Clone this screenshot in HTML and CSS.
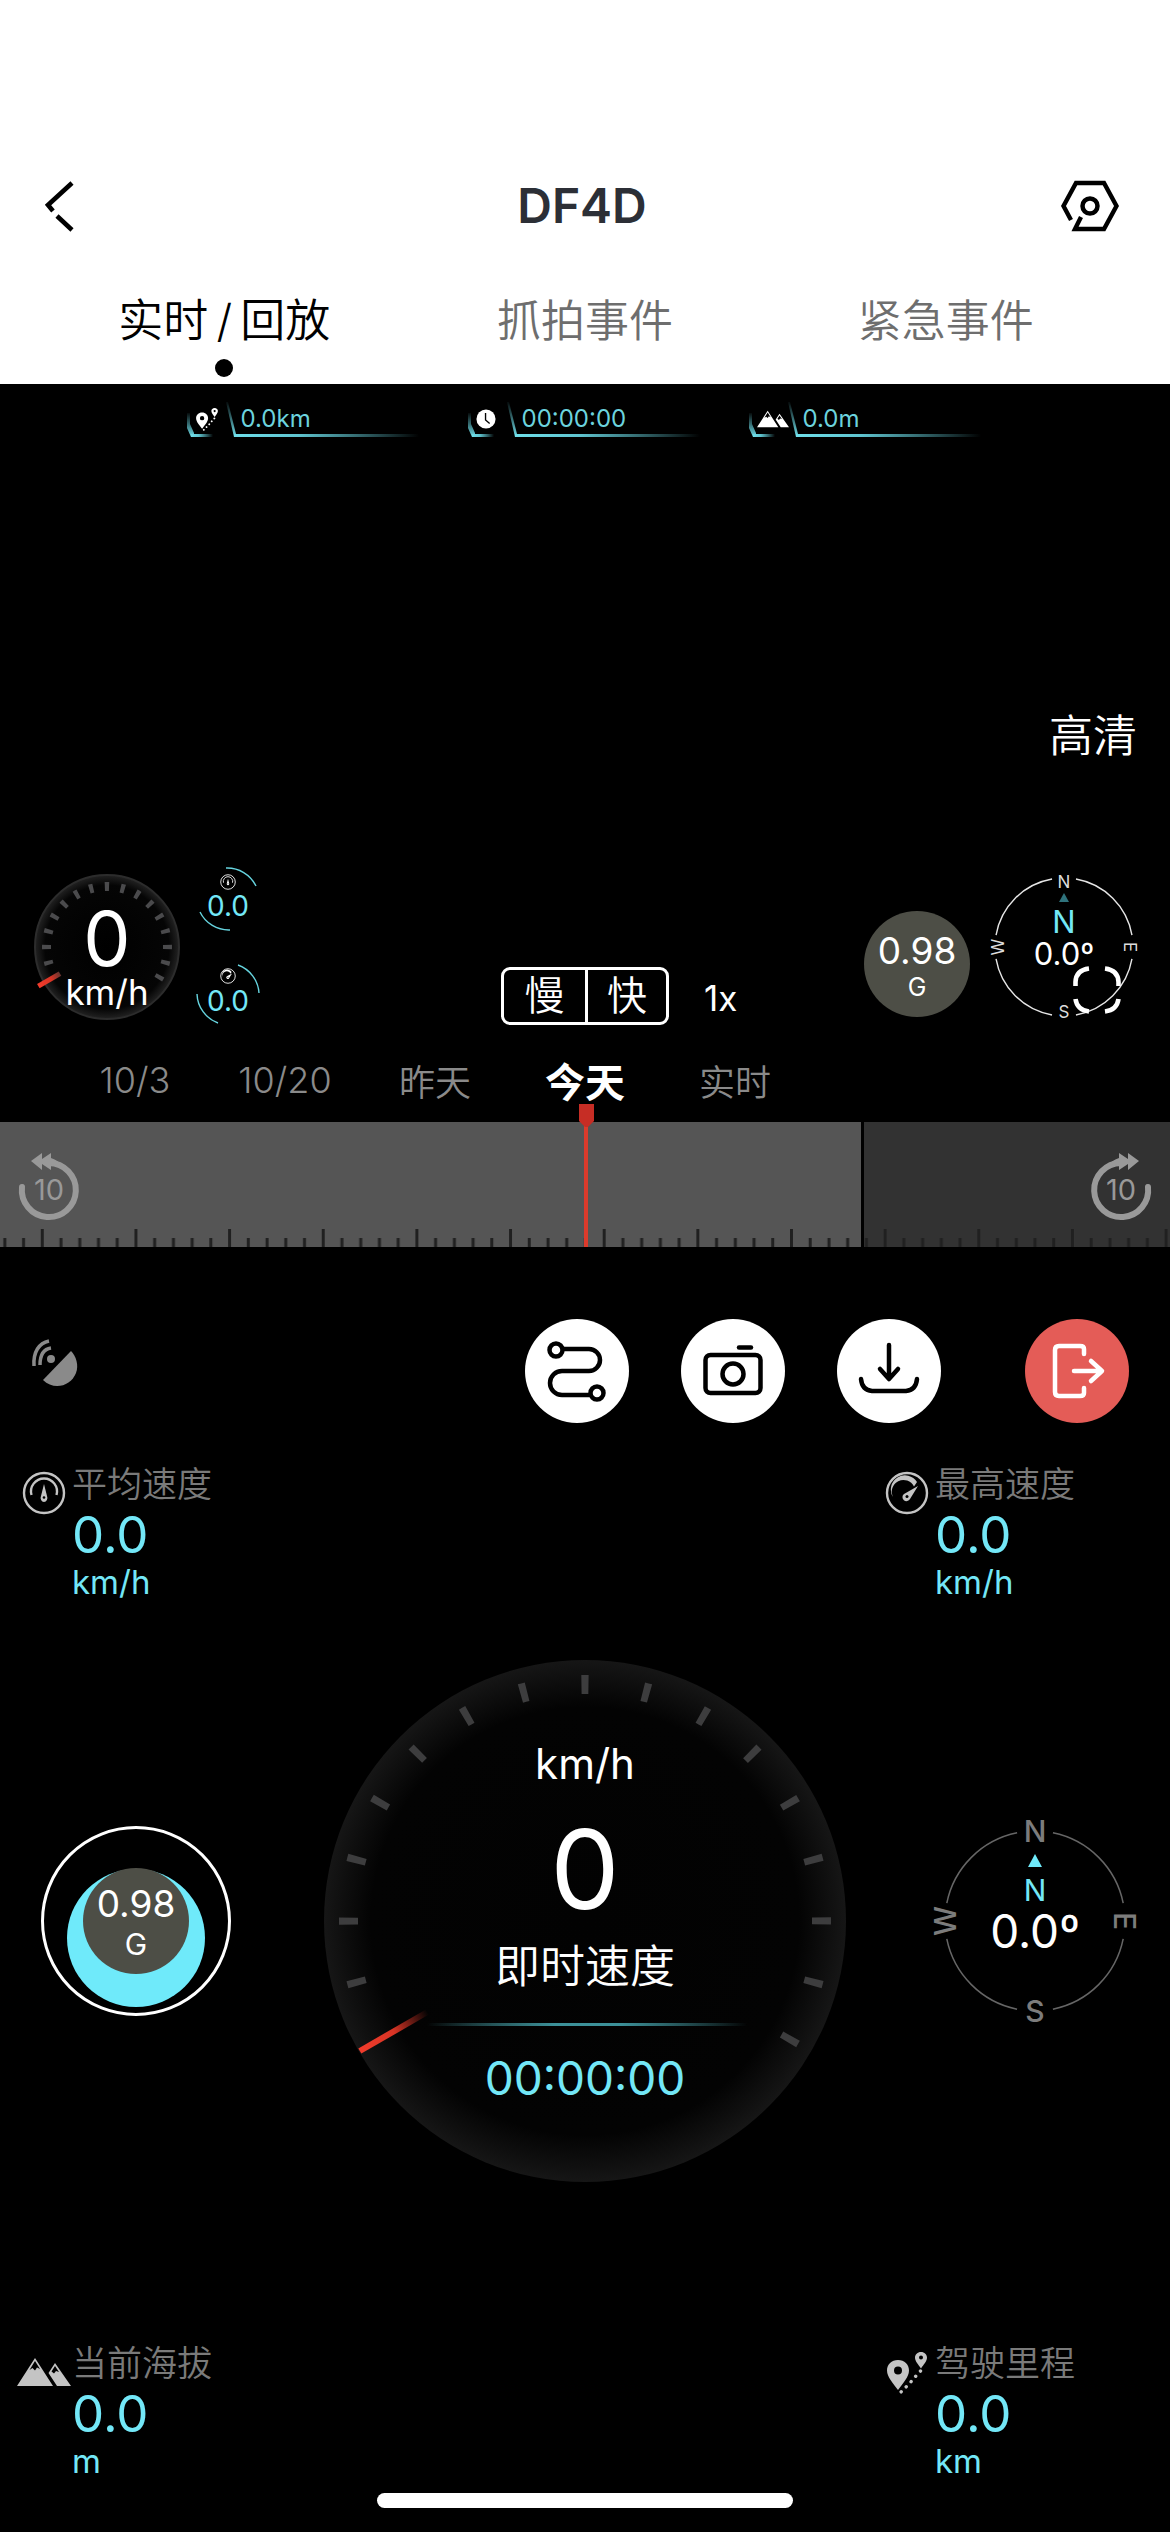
FILE: index.html
```html
<!DOCTYPE html>
<html lang="zh-CN">
<head>
<meta charset="utf-8">
<meta name="viewport" content="width=device-width, initial-scale=1">
<title>DF4D</title>
<link rel="stylesheet" href="styles.css">
</head>
<body>
<svg class="defs" width="0" height="0" aria-hidden="true">
  <defs>
    <symbol id="i-avg" viewBox="0 0 44 44">
      <circle cx="22" cy="22" r="20" fill="none" stroke="currentColor" stroke-width="2.4"/>
      <path d="M9.500 24a13 13 0 1 1 25 0" fill="none" stroke="currentColor" stroke-width="2.400"/>
      <path d="M22 13l3 12a3.400 4 0 1 1-6 0z" fill="currentColor"/>
      <circle cx="22" cy="26.500" r="1.300" fill="#000"/>
    </symbol>
    <symbol id="i-max" viewBox="0 0 44 44">
      <circle cx="22" cy="22" r="20" fill="none" stroke="currentColor" stroke-width="2.4"/>
      <path d="M8 26a14 14 0 0 1 24-15l-3 4.500A11 11 0 0 0 8 26z" fill="currentColor"/>
      <path d="M33 15l-8 13a4 4 0 1 1-6-5z" fill="currentColor"/>
      <circle cx="22" cy="25.500" r="1.500" fill="#000"/>
    </symbol>
    <symbol id="i-trip" viewBox="0 0 44 44">
      <path fill-rule="evenodd" d="M13 10C6.500 10 2 14.500 2 20.500 2 27 8 33 13 40c5-7 11-13 11-19.500C24 14.500 19.500 10 13 10zm0 6.500a4 4 0 1 1 0 8 4 4 0 0 1 0-8z" fill="currentColor"/>
      <path fill-rule="evenodd" d="M36 2c-3.500 0-6 2.500-6 5.500 0 4 3.500 7 6 11 2.500-4 6-7 6-11C42 4.500 39.500 2 36 2zm0 3.500a2 2 0 1 1 0 4 2 2 0 0 1 0-4z" fill="currentColor"/>
      <path d="M35.500 21L30 27l-5 6-5 5-4 4" fill="none" stroke="currentColor" stroke-width="3.400" stroke-linecap="round" stroke-dasharray="0.1 7"/>
    </symbol>
    <symbol id="i-alt" viewBox="0 0 54 30">
      <path fill-rule="evenodd" d="M18 1L0 29h36zM18 4l5 8-3-1.500-2 3-2.500-2.500-3 2z" fill="currentColor"/>
      <path fill-rule="evenodd" d="M38 6l-6.500 10L40 29h14zM38 9l4 6-3-1-2 2.500-2.500-2z" fill="currentColor"/>
    </symbol>
    <symbol id="i-clock" viewBox="0 0 44 44">
      <circle cx="22" cy="22" r="21" fill="currentColor"/>
      <path d="M21 9v15l9 8" fill="none" stroke="#000" stroke-width="3"/>
    </symbol>
    <linearGradient id="g-line" x1="0" x2="1" y1="0" y2="0"><stop offset="0" stop-color="#6fdfea"/><stop offset=".35" stop-color="#5fc4cf"/><stop offset="1" stop-color="#6fdfea" stop-opacity="0"/></linearGradient>
    <linearGradient id="g-up" x1="0" x2="0" y1="1" y2="0"><stop offset="0" stop-color="#6fdfea"/><stop offset="1" stop-color="#6fdfea" stop-opacity="0.050"/></linearGradient>
    <symbol id="i-hud" viewBox="0 0 240 40">
      <path d="M0 14h3v11l4 9v4H4L0 29z" fill="url(#g-up)"/>
      <path d="M4 35h22v3H5z" fill="url(#g-line)"/>
      <path d="M39 3l2 0 8 32-2 3z" fill="url(#g-up)"/>
      <path d="M47 35h185v3H47z" fill="url(#g-line)"/>
    </symbol>
    <radialGradient id="g-dial"><stop offset="0" stop-color="#020202"/><stop offset=".82" stop-color="#030303"/><stop offset="1" stop-color="#161616"/></radialGradient>
    <radialGradient id="g-mini"><stop offset="0" stop-color="#000"/><stop offset=".86" stop-color="#050505"/><stop offset="1" stop-color="#222"/></radialGradient>
    <linearGradient id="g-needle" gradientUnits="userSpaceOnUse" x1="-260" x2="-182" y1="0" y2="0"><stop offset="0" stop-color="#f23c2c"/><stop offset=".5" stop-color="#d83425"/><stop offset="1" stop-color="#d83425" stop-opacity="0"/></linearGradient>
    <linearGradient id="g-mneedle" gradientUnits="userSpaceOnUse" x1="-79" x2="-54" y1="0" y2="0"><stop offset="0" stop-color="#f23c2c"/><stop offset=".6" stop-color="#d83425"/><stop offset="1" stop-color="#663530"/></linearGradient>
    <linearGradient id="g-rule" gradientUnits="userSpaceOnUse" x1="-158" x2="162" y1="0" y2="0"><stop offset="0" stop-color="#4fb0b8" stop-opacity="0"/><stop offset=".4" stop-color="#3c9199"/><stop offset=".6" stop-color="#3c9199"/><stop offset="1" stop-color="#4fb0b8" stop-opacity="0"/></linearGradient>
    <pattern id="p-ticks" x="40.800" y="0" width="93.650" height="18" patternUnits="userSpaceOnUse">
      <path d="M0 0h3v18H0zM18.700 9h3v9h-3zM37.500 9h3v9h-3zM56.200 9h3v9h-3zM74.900 9h3v9h-3z" fill="#202020"/>
    </pattern>
  </defs>
</svg>

<header class="top">
  <div class="title-row">
    <button class="icon-btn" type="button" aria-label="返回">
      <svg width="28" height="50" viewBox="0 0 28 50" fill="none" stroke="#000" stroke-width="4.600"><path d="M27 2L3 24l5 6M12 35l15 14"/></svg>
    </button>
    <h1>DF4D</h1>
    <button class="icon-btn" type="button" aria-label="设置">
      <svg width="58" height="52" viewBox="0 0 58 52" fill="none" stroke="#000" stroke-width="4.400"><path d="M10 40L2.500 26 15 3h28l12.500 23L43 49H14l6-12"/><circle cx="29" cy="26" r="7.500" stroke-width="4.500"/></svg>
    </button>
  </div>
  <nav class="tabs">
    <a href="#live" class="tab active">实时&thinsp;/&thinsp;回放</a>
    <a href="#snap" class="tab">抓拍事件</a>
    <a href="#sos" class="tab">紧急事件</a>
  </nav>
</header>

<main>
  <section class="player">
    <div class="hud">
      <div class="hud-item"><svg width="240" height="40"><use href="#i-hud"/></svg><svg class="hud-icon" width="24" height="24"><use href="#i-trip"/></svg><span>0.0km</span></div>
      <div class="hud-item"><svg width="240" height="40"><use href="#i-hud"/></svg><svg class="hud-icon" width="20" height="20"><use href="#i-clock"/></svg><span>00:00:00</span></div>
      <div class="hud-item"><svg width="240" height="40"><use href="#i-hud"/></svg><svg class="hud-icon" width="32" height="18"><use href="#i-alt"/></svg><span>0.0m</span></div>
    </div>
    <button class="quality" type="button">高清</button>

    <div class="overlay">
      <div class="overlay-left">
        <svg width="148" height="148" viewBox="-74 -74 148 148">
          <circle r="72" fill="url(#g-mini)" stroke="#2c2c2c" stroke-width="2"/>
          <circle r="60.500" fill="none" stroke="#4a4a4c" stroke-width="9" pathLength="360" transform="rotate(-197)" stroke-dasharray="4 11 4 11 4 11 4 11 4 11 4 11 4 11 4 11 4 11 4 11 4 11 4 11 4 11 4 11 4 11 4 131"/>
          <path d="M-79-3h25v5h-25z" fill="url(#g-mneedle)" transform="rotate(-30)"/>
          <text class="white" y="19" font-size="75">0</text>
          <text class="white" y="58" font-size="35">km/h</text>
        </svg>
        <svg width="70" height="170" viewBox="-35 -85 70 170" fill="none">
          <g stroke="#66d4df" stroke-width="1.400">
            <path d="M-2-79A32 32 0 0 1 28-61M-28-35A32 32 0 0 0 2-17"/>
            <path d="M10 18A32 32 0 0 1 31 46M-31 47A32 32 0 0 0-10 76"/>
          </g>
          <svg x="-8" y="-73" width="16" height="16" color="#fff"><use href="#i-avg"/></svg>
          <svg x="-8" y="21" width="16" height="16" color="#fff"><use href="#i-max"/></svg>
          <text class="cyan" y="-31" font-size="28">0.0</text>
          <text class="cyan" y="64" font-size="28">0.0</text>
        </svg>
      </div>
      <div class="speed">
        <button type="button">慢</button>
        <button type="button">快</button>
      </div>
      <div class="overlay-right">
        <span class="rate">1x</span>
        <svg class="g-badge" width="106" height="106" viewBox="-53 -53 106 106">
          <circle r="53" fill="#4d4e46"/>
          <text class="white" y="0" font-size="37">0.98</text>
          <text class="white" y="32" font-size="25">G</text>
        </svg>
        <div class="compass-mini">
          <svg width="160" height="160" viewBox="-80 -80 160 160">
            <circle r="69" fill="none" stroke="#e6e6e6" stroke-width="1.400" pathLength="360" stroke-dasharray="70 20" transform="rotate(10)"/>
            <g fill="#ddd" font-size="17">
              <text y="-59">N</text><text y="71">S</text>
              <text y="-60" transform="rotate(90)">E</text><text y="-60" transform="rotate(-90)">W</text>
            </g>
            <path d="M0-54l5 9h-10z" fill="#2f737c"/>
            <text class="cyan" y="-14" font-size="31">N</text>
            <text class="white" y="18" font-size="31">0.0º</text>
          </svg>
          <button class="full" type="button" aria-label="全屏">
            <svg width="48" height="48" viewBox="0 0 48 48" fill="none" stroke="#fff" stroke-width="4.600"><path d="M2.500 20v-4Q3 4 16 2.500M32 2.500Q45 4 45.500 16v4M45.500 33Q44 44 32 45.500M16 45.500Q4 44 2.500 33"/></svg>
          </button>
        </div>
      </div>
    </div>

    <nav class="days">
      <a href="#d3">10/3</a><a href="#d20">10/20</a><a href="#yesterday">昨天</a><a href="#today" class="active">今天</a><a href="#now">实时</a>
    </nav>

    <div class="timeline">
      <svg class="ticks" width="100%" height="18"><rect width="100%" height="18" fill="url(#p-ticks)"/></svg>
      <button class="icon-btn" type="button" aria-label="后退10秒">
        <svg width="64" height="70" viewBox="0 0 64 70">
          <path d="M5 37A27 27 0 1 0 32 13" fill="none" stroke="#999" stroke-width="6" stroke-linecap="round"/>
          <path d="M25 3v6l9-6v5q8 3 10 7l-10-1v6l-9-6v6L14 11z" fill="#999"/>
          <text x="32" y="50" font-size="29" fill="#999">10</text>
        </svg>
      </button>
      <button class="icon-btn" type="button" aria-label="前进10秒">
        <svg width="64" height="70" viewBox="0 0 64 70">
          <path d="M59 37A27 27 0 1 1 32 13" fill="none" stroke="#999" stroke-width="6" stroke-linecap="round"/>
          <path d="M39 3v6l-9-6v5q-8 3-10 7l10-1v6l9-6v6L50 11z" fill="#999"/>
          <text x="32" y="50" font-size="29" fill="#999">10</text>
        </svg>
      </button>
      <svg class="playhead" width="16" height="143" viewBox="0 0 16 143"><path d="M6 18h4v125H6z" fill="#dc3b2c"/><path d="M1 0h15v17l-6 6H7l-6-6z" fill="#c62d25"/></svg>
    </div>
  </section>

  <div class="actions">
    <svg class="signal" width="46" height="48" viewBox="0 0 46 48" fill="none" stroke="#8a8a8a">
      <path d="M2 27C1 13 7 4 17 2M8 26C8 16 12 10 19 9" stroke-width="3.500"/>
      <circle cx="19" cy="20" r="4" fill="#8a8a8a" stroke="none"/>
      <path d="M39 12L11 41C22 52 39 47 44 34C47 26 44 17 39 12z" fill="#8a8a8a" stroke="none"/>
    </svg>
    <button class="round" type="button" aria-label="轨迹">
      <svg width="64" height="64" viewBox="0 0 64 64" fill="none" stroke="#000" stroke-width="4.500"><circle cx="11" cy="11" r="6.500"/><circle cx="52" cy="54" r="6.500"/><path d="M18 10h26a11 11 0 0 1 0 22H17a12 12 0 0 0 0 24h28"/></svg>
    </button>
    <button class="round" type="button" aria-label="拍照">
      <svg width="64" height="64" viewBox="0 0 64 64" fill="none" stroke="#000" stroke-width="4.500"><rect x="4.500" y="16" width="55" height="38" rx="5"/><circle cx="32" cy="35" r="10.500"/><path d="M38 8.500h12" stroke-linecap="round"/></svg>
    </button>
    <button class="round" type="button" aria-label="下载">
      <svg width="64" height="64" viewBox="0 0 64 64" fill="none" stroke="#000" stroke-width="4.500" stroke-linecap="round" stroke-linejoin="round"><path d="M32 6v33M23 30l9 10 9-10M4 40q1 11 11 12h34q10-1 11-12"/></svg>
    </button>
    <button class="round exit" type="button" aria-label="退出">
      <svg width="64" height="64" viewBox="0 0 64 64" fill="none" stroke="#fff" stroke-width="4.500" stroke-linecap="round" stroke-linejoin="round"><path d="M39 15v-5q0-3-4-3H14q-4 0-4 4v42q0 4 4 4h21q4 0 4-3v-5M29 32h27M46 22l11 10-11 10"/></svg>
    </button>
  </div>

  <section class="dash">
    <div class="stats">
      <div class="stat"><span class="stat-icon"><svg width="44" height="44"><use href="#i-avg"/></svg></span><dl><dt>平均速度</dt><dd class="value">0.0</dd><dd>km/h</dd></dl></div>
      <div class="stat"><span class="stat-icon"><svg width="44" height="44"><use href="#i-max"/></svg></span><dl><dt>最高速度</dt><dd class="value">0.0</dd><dd>km/h</dd></dl></div>
    </div>

    <div class="dials">
      <svg class="g-dial" width="192" height="192" viewBox="-96 -96 192 192">
        <circle r="93.500" fill="none" stroke="#fff" stroke-width="3"/>
        <circle cy="17" r="69" fill="#6feafa"/>
        <circle r="53" fill="#4d4e46"/>
        <text class="white" y="-4" font-size="37">0.98</text>
        <text class="white" y="34" font-size="30">G</text>
      </svg>
      <svg width="522" height="522" viewBox="-261 -261 522 522">
        <circle r="261" fill="url(#g-dial)"/>
        <circle r="236.500" fill="none" stroke="#3d3d3e" stroke-width="19" pathLength="360" transform="rotate(-195.850)" stroke-dasharray="1.700 13.300 1.700 13.300 1.700 13.300 1.700 13.300 1.700 13.300 1.700 13.300 1.700 13.300 1.700 13.300 1.700 13.300 1.700 13.300 1.700 13.300 1.700 13.300 1.700 13.300 1.700 13.300 1.700 13.300 1.700 133.300"/>
        <path d="M-260-3h78v6h-78z" fill="url(#g-needle)" transform="rotate(-30)"/>
        <text class="white" y="-142" font-size="42">km/h</text>
        <text class="white" y="-12" font-size="110">0</text>
        <text class="cjk white" y="62" font-size="45">即时速度</text>
        <path d="M-158 102h320v3h-320z" fill="url(#g-rule)"/>
        <text class="cyan" y="174" font-size="46">00:00:00</text>
      </svg>
      <svg class="compass" width="200" height="200" viewBox="-100 -100 200 200">
        <circle r="90" fill="none" stroke="#666" stroke-width="1.500" pathLength="360" stroke-dasharray="67 23" transform="rotate(11.500)"/>
        <g class="medium" fill="#7c7c7c" font-size="30">
          <text y="-79">N</text><text y="101">S</text>
          <text y="-79" transform="rotate(90)">E</text><text y="-79" transform="rotate(-90)">W</text>
        </g>
        <path d="M0-67l7 13h-14z" fill="#6feafa"/>
        <text class="cyan" y="-20" font-size="30">N</text>
        <text class="white" y="27" font-size="46">0.0º</text>
      </svg>
    </div>

    <div class="stats">
      <div class="stat"><span class="stat-icon"><svg width="54" height="30"><use href="#i-alt"/></svg></span><dl><dt>当前海拔</dt><dd class="value">0.0</dd><dd>m</dd></dl></div>
      <div class="stat"><span class="stat-icon"><svg width="44" height="44"><use href="#i-trip"/></svg></span><dl><dt>驾驶里程</dt><dd class="value">0.0</dd><dd>km</dd></dl></div>
    </div>
  </section>
</main>
<div class="home-bar"></div>
</body>
</html>
```
FILE: styles.css
```css
:root {
  --cyan: #73e7f7;
  --muted: #7a7a7a;
  --cjk: "Noto Sans CJK SC", "Noto Sans", sans-serif;
  --sans: Inter, "Noto Sans CJK SC", sans-serif;
}

* { box-sizing: border-box; }

body {
  margin: 0;
  min-height: 100vh;
  background: #000;
  color: #fff;
  font-family: var(--sans);
  font-weight: 400;
}

button {
  margin: 0;
  padding: 0;
  border: 0;
  background: none;
  color: inherit;
  font: inherit;
}

a { color: inherit; text-decoration: none; }
svg { display: block; overflow: visible; }
.defs { position: absolute; }

svg text { text-anchor: middle; }
.cjk { font-family: var(--cjk); }
.cjk, .tab, .quality, .speed, .days, dt { font-weight: 350; }
.medium { font-weight: 500; }
.white { fill: #fff; }
.cyan { fill: var(--cyan); }

/* header */
.top { padding-top: 150px; background: #fff; }

.title-row {
  display: flex;
  align-items: center;
  justify-content: space-between;
  height: 112px;
  padding: 0 51px 0 45px;
}

.title-row .icon-btn { display: flex; width: 58px; }

.title-row h1 {
  margin: 0;
  color: #2c2f36;
  font-size: 48px;
  font-weight: 600;
  line-height: 60px;
}

.tabs {
  display: grid;
  grid-template-columns: repeat(3, 1fr);
  height: 122px;
  padding: 29px 44px 0;
}

.tab {
  display: flex;
  flex-direction: column;
  align-items: center;
  gap: 8px;
  color: #6e6e6e;
  font-size: 44px;
  line-height: 60px;
}

.tab.active { color: #000; font-size: 45px; }

.tab.active::after {
  content: "";
  width: 18px;
  height: 18px;
  border-radius: 50%;
  background: #000;
}

/* player */
.player { display: flex; flex-direction: column; padding-top: 15px; }

.hud {
  display: grid;
  grid-template-columns: repeat(3, 281px);
  justify-content: center;
  padding-left: 46px;
}

.hud-item { display: grid; align-items: center; justify-items: start; }
.hud-item > * { grid-area: 1 / 1; }
.hud-icon { justify-self: start; margin-left: 8px; }
.hud-item span {
  margin-left: 54px;
  color: #6cd3de;
  font-size: 24px;
  line-height: 36px;
}

.quality {
  align-self: flex-end;
  margin: 267px 33px 96px 0;
  font-size: 44px;
  line-height: 60px;
}

.overlay {
  display: grid;
  grid-template-columns: 1fr auto 1fr;
  align-items: center;
  height: 170px;
}

.overlay-left { display: flex; align-items: center; gap: 12px; padding-left: 33px; }

.speed {
  display: flex;
  align-self: end;
  height: 58px;
  margin-bottom: 7px;
  border: 3px solid #fff;
  border-radius: 9px;
  font-size: 40px;
  line-height: 52px;
}

.speed button { width: 81px; }
.speed button + button { border-left: 3px solid #fff; }

.overlay-right { display: flex; align-items: center; padding-right: 26px; gap: 14px; }
.rate { margin: 102px auto 0 35px; font-size: 35px; line-height: 40px; }
.g-badge { margin-top: 34px; }
.compass-mini { position: relative; }
.full { position: absolute; left: 89px; top: 99px; }

.days {
  display: grid;
  grid-template-columns: repeat(5, 150px);
  align-items: center;
  height: 78px;
  margin-top: 10px;
  padding: 0 0 2px 60px;
  color: #8a8a8a;
  font-size: 36px;
  text-align: center;
}

.days .active { color: #fff; font-size: 40px; font-weight: 700; }

.timeline {
  position: relative;
  display: flex;
  align-items: center;
  justify-content: space-between;
  height: 125px;
  margin-top: 2px;
  padding: 0 17px;
  background: linear-gradient(90deg, #555 861px, #000 861px, #000 864px, #323232 864px);
}

.ticks { position: absolute; left: 0; bottom: 0; }
.playhead { position: absolute; left: 50%; bottom: 0; margin-left: -7px; }

/* actions */
.actions {
  display: flex;
  align-items: center;
  gap: 52px;
  padding: 72px 41px 0 32px;
}

.signal { align-self: flex-start; margin: 20px auto 0 0; }

.round {
  display: grid;
  place-items: center;
  width: 104px;
  height: 104px;
  border-radius: 50%;
  background: #fff;
}

.exit { margin-left: 32px; background: #e45c57; }

/* dashboard */
.dash { padding-top: 35px; }

.stats { display: flex; justify-content: space-between; }
.stat { display: flex; width: 307px; padding-left: 16px; }
.stat-icon {
  display: grid;
  place-items: center;
  width: 56px;
  height: 44px;
  margin-top: 13px;
  color: #c4c4c4;
}

dl { margin: 0; color: var(--cyan); font-size: 33px; line-height: 36px; }
dt { color: var(--muted); font-family: var(--cjk); font-size: 35px; line-height: 48px; }
dd { margin: 0; }
.value { font-size: 51px; line-height: 58px; }

.dials {
  display: grid;
  grid-template-columns: 1fr auto 1fr;
  align-items: center;
  margin: 60px 0 155px;
  padding: 0 35px;
}

.g-dial { margin-left: 5px; }
.compass { justify-self: end; }

.home-bar {
  width: 416px;
  height: 15px;
  margin: 14px auto 24px;
  border-radius: 8px;
  background: #fff;
}
```
